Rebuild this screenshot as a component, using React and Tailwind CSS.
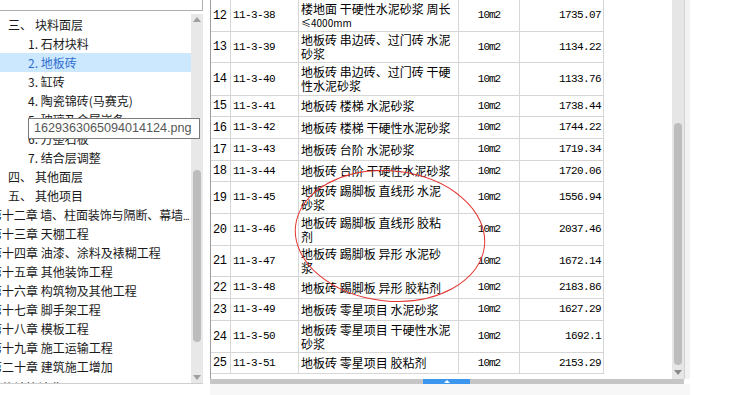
import React from "react";

const cjk = "font-['Noto_Sans_CJK_SC','Noto_Sans',sans-serif]";
const mono = "font-['Liberation_Mono','DejaVu_Sans_Mono',monospace]";

const tree = [
  { a: "三、", b: "块料面层", pl: "pl-[8px]" },
  { t: "1. 石材块料", pl: "pl-[28px]" },
  { t: "2. 地板砖", pl: "pl-[28px]", sel: true },
  { t: "3. 缸砖", pl: "pl-[28px]" },
  { t: "4. 陶瓷锦砖(马赛克)", pl: "pl-[28px]" },
  { t: "5. 玻璃及金属嵌条", pl: "pl-[28px]" },
  { t: "6. 方整石板", pl: "pl-[28px]" },
  { t: "7. 结合层调整", pl: "pl-[28px]" },
  { a: "四、", b: "其他面层", pl: "pl-[8px]" },
  { a: "五、", b: "其他项目", pl: "pl-[8px]" },
  { t: "第十二章 墙、柱面装饰与隔断、幕墙", more: true, ch: true },
  { t: "第十三章 天棚工程", ch: true },
  { t: "第十四章 油漆、涂料及裱糊工程", ch: true },
  { t: "第十五章 其他装饰工程", ch: true },
  { t: "第十六章 构筑物及其他工程", ch: true },
  { t: "第十七章 脚手架工程", ch: true },
  { t: "第十八章 模板工程", ch: true },
  { t: "第十九章 施工运输工程", ch: true },
  { t: "第二十章 建筑施工增加", ch: true },
  { t: "措施计算计费用", ch: true },
];

const rows = [
  { n: 12, c: "11-3-38", d: ["楼地面 干硬性水泥砂浆 周长", "≤4000mm"], p: "1735.07", h: "h-[32px]", small: true },
  { n: 13, c: "11-3-39", d: ["地板砖 串边砖、过门砖 水泥", "砂浆"], p: "1134.22", h: "h-[31px]" },
  { n: 14, c: "11-3-40", d: ["地板砖 串边砖、过门砖 干硬", "性水泥砂浆"], p: "1133.76", h: "h-[33px]" },
  { n: 15, c: "11-3-41", d: ["地板砖 楼梯 水泥砂浆"], p: "1738.44", h: "h-[21px]" },
  { n: 16, c: "11-3-42", d: ["地板砖 楼梯 干硬性水泥砂浆"], p: "1744.22", h: "h-[22px]" },
  { n: 17, c: "11-3-43", d: ["地板砖 台阶 水泥砂浆"], p: "1719.34", h: "h-[22px]" },
  { n: 18, c: "11-3-44", d: ["地板砖 台阶 干硬性水泥砂浆"], p: "1720.06", h: "h-[21px]" },
  { n: 19, c: "11-3-45", d: ["地板砖 踢脚板 直线形 水泥", "砂浆"], p: "1556.94", h: "h-[32px]" },
  { n: 20, c: "11-3-46", d: ["地板砖 踢脚板 直线形 胶粘", "剂"], p: "2037.46", h: "h-[32px]" },
  { n: 21, c: "11-3-47", d: ["地板砖 踢脚板 异形 水泥砂", "浆"], p: "1672.14", h: "h-[31px]" },
  { n: 22, c: "11-3-48", d: ["地板砖 踢脚板 异形 胶粘剂"], p: "2183.86", h: "h-[22px]" },
  { n: 23, c: "11-3-49", d: ["地板砖 零星项目 水泥砂浆"], p: "1627.29", h: "h-[22px]" },
  { n: 24, c: "11-3-50", d: ["地板砖 零星项目 干硬性水泥", "砂浆"], p: "1692.1", h: "h-[32px]" },
  { n: 25, c: "11-3-51", d: ["地板砖 零星项目 胶粘剂"], p: "2153.29", h: "h-[21px]" },
];

function Tri({ down, color = "#a0a0a0" }) {
  return (
    <svg width="8" height="5" viewBox="0 0 8 5">
      {down ? (
        <polygon points="0,0 8,0 4,5" fill={color} />
      ) : (
        <polygon points="0,5 8,5 4,0" fill={color} />
      )}
    </svg>
  );
}

export default function App() {
  return (
    <div className="w-[753px] h-[395px] relative overflow-hidden bg-white flex">
      {/* Left panel */}
      <div className="w-[204px] h-full flex flex-col shrink-0">
        <div className="h-[11px] w-[203px] border-r border-b border-[#aeaeae] bg-white" />
        <div className="h-[3px]" />
        <div className="h-[370px] w-[203px] flex border-b border-[#cfcfcf]">
          <div className={`w-[191px] overflow-hidden pt-[1px] ${cjk} text-[12px] text-[#1a1a1a]`}>
            {tree.map((r, i) => (
              <div
                key={i}
                className={`h-[19px] flex items-center whitespace-nowrap ${
                  r.sel ? "bg-[#cce8ff] text-[#2f6fd0]" : ""
                } ${r.ch ? "ml-[-10px]" : r.pl} ${i === tree.length - 1 ? "pt-[4px]" : ""}`}
              >
                {r.a ? (
                  <>
                    <span className="w-[27px]">{r.a}</span>
                    <span>{r.b}</span>
                  </>
                ) : (
                  <span className={r.more ? "tracking-[-0.1px]" : ""}>
                    {r.t}
                    {r.more ? <span className="text-[9px] tracking-[-0.5px]">...</span> : null}
                  </span>
                )}
              </div>
            ))}
          </div>
          <div className="w-[12px] bg-[#e8e8e8] flex flex-col items-center">
            <div className="h-[10px] flex items-center justify-center">
              <Tri />
            </div>
            <div className="mt-[146px] h-[172px] w-[8px] rounded-full bg-[#bdbdbd]" />
            <div className="mt-auto h-[12px] flex items-center justify-center">
              <Tri down />
            </div>
          </div>
        </div>
      </div>

      {/* Main table area */}
      <div className="ml-[6px] w-[480px] h-full flex flex-col shrink-0">
        <div className="h-[379px] flex">
          <div className="w-[394px] border-l border-[#9e9e9e] overflow-hidden">
            {rows.map((r) => (
              <div key={r.n} className={`${r.h} flex border-b border-[#d6d6d6] text-black`}>
                <div className={`w-[20px] border-r border-[#d6d6d6] flex items-center pl-[2px] ${mono} text-[12px] tracking-[-0.5px]`}>
                  {r.n}
                </div>
                <div className={`w-[68px] border-r border-[#d6d6d6] flex items-center pl-[2px] ${mono} text-[11px] tracking-[-0.6px]`}>
                  {r.c}
                </div>
                <div className={`w-[160px] border-r border-[#d6d6d6] flex flex-col justify-center pl-[2px] ${cjk} text-[12px] leading-[14px]`}>
                  {r.d.map((l, i) => (
                    <div key={i} className={`whitespace-nowrap ${r.small && i === 1 ? "text-[10px] leading-[13px]" : ""}`}>
                      {l}
                    </div>
                  ))}
                </div>
                <div className={`w-[61px] border-r border-[#d6d6d6] flex items-center justify-center ${mono} text-[11px] tracking-[-1px]`}>
                  10m2
                </div>
                <div className={`w-[84px] border-r border-[#d6d6d6] flex items-center justify-end pr-[2px] ${mono} text-[11px] tracking-[-0.6px]`}>
                  {r.p}
                </div>
              </div>
            ))}
          </div>
          <div className="flex-1 bg-white" />
          <div className="w-[12px] bg-[#e6e6e6] flex flex-col items-center">
            <div className="mt-[123px] h-[242px] w-[8px] rounded-full bg-[#bdbdbd]" />
            <div className="mt-auto mb-[2px] h-[10px] flex items-center justify-center">
              <Tri down color="#8a8a8a" />
            </div>
          </div>
          <div className="w-[1px] bg-[#d2d2d2]" />
          <div className="w-[5px] bg-[#f2f2f2]" />
        </div>
        <div className="h-[5px] w-[474px] bg-[#c6c6c6] flex">
          <div className="ml-[213px] w-[47px] h-full bg-[#3d97ee] flex items-center justify-center">
            <svg width="6" height="3" viewBox="0 0 6 3">
              <polygon points="0,3 6,3 3,0" fill="#ffffff" />
            </svg>
          </div>
        </div>
        <div className="h-[11px] bg-[#f7f7f7] w-[480px]" />
      </div>

      {/* Tooltip */}
      <div className="absolute left-[28px] top-[118px] w-[172px] h-[21px] border border-[#7a7a7a] bg-white flex items-center pl-[5px] font-['Liberation_Sans',Arial,sans-serif] text-[12.6px] text-[#575757] whitespace-nowrap">
        1629363065094014124.png
      </div>

      {/* Red hand-drawn ellipse */}
      <svg className="absolute left-0 top-0 pointer-events-none" width="753" height="395">
        <ellipse cx="390" cy="236" rx="95" ry="65" transform="rotate(6 390 236)" fill="none" stroke="#e3342f" strokeWidth="1" />
      </svg>
    </div>
  );
}
